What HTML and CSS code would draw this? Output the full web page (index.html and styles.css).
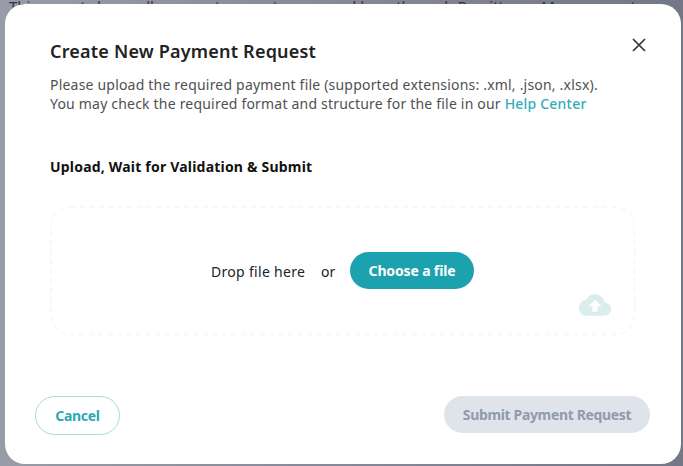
FILE: index.html
```
<!DOCTYPE html>
<html lang="en">
  <head>
    <meta charset="UTF-8" />
    <meta name="viewport" content="width=device-width, initial-scale=1.0" />
    <title>Create New Payment Request</title>
    <link rel="stylesheet" href="styles.css">
  </head>
  <body>
    <!-- page behind the modal -->
    <p class="page-text">This report shows all payment requests managed here through Remittance Management</p>

    <!-- modal -->
    <section class="modal" role="dialog">
      <button class="close" aria-label="Close">
        <svg width="14" height="14" viewBox="0 0 14 14">
          <path d="M1 1L13 13M13 1L1 13" fill="none" stroke="#333" stroke-width="1.7" />
        </svg>
      </button>

      <header class="modal-header">
        <h1>Create New Payment Request</h1>
        <p>Please upload the required payment file (supported extensions: .xml, .json, .xlsx).</p>
        <p>You may check the required format and structure for the file in our <a href="#">Help Center</a></p>
      </header>

      <h2>Upload, Wait for Validation &amp; Submit</h2>

      <div class="dropzone">
        <svg class="dropzone-border" width="586" height="130">
          <rect x="1" y="1" width="583.5" height="127.5" rx="19" fill="none" stroke="#f6f8f9" stroke-width="1.8" stroke-dasharray="5.5 4" />
        </svg>
        <span class="drop">Drop file here</span>
        <span class="or">or</span>
        <button class="btn choose">Choose a file</button>
        <svg class="cloud" width="32" height="32" viewBox="0 0 24 24">
          <path fill="#daeceb" d="M19.35 10.04C18.67 6.59 15.64 4 12 4 9.11 4 6.6 5.64 5.35 8.04 2.34 8.36 0 10.91 0 14c0 3.31 2.69 6 6 6h13c2.76 0 5-2.24 5-5 0-2.64-2.05-4.78-4.65-4.96zM14 13v4h-4v-4H7l5-5 5 5h-3z" />
        </svg>
      </div>

      <footer class="modal-footer">
        <button class="btn cancel">Cancel</button>
        <button class="btn submit" disabled>Submit Payment Request</button>
      </footer>
    </section>
  </body>
</html>
```
FILE: styles.css
```
* {
  margin: 0;
  padding: 0;
  box-sizing: border-box;
}
body {
  position: relative;
  height: 466px;
  padding: 4px 2px 2px 5px;
  overflow: hidden;
  font-family: "Noto Sans", "Open Sans", sans-serif;
  font-size: 14px;
  color: #222;
  background: linear-gradient(to right, #989ba8, #737786);
}
a {
  text-decoration: none;
  color: #35adb7;
}
button {
  border: none;
  background: none;
  font-family: inherit;
}
.page-text {
  position: absolute;
  top: -4px;
  left: 9px;
  white-space: nowrap;
  font-size: 15px;
  line-height: 20px;
  color: #30344a;
}
.modal {
  position: relative;
  display: flex;
  flex-direction: column;
  width: 676px;
  height: 460px;
  padding: 36px 31px 0 30px;
  border-radius: 20px;
  background-color: #fff;
}
.close {
  position: absolute;
  top: 34px;
  right: 35px;
  width: 14px;
  height: 14px;
}
.close svg {
  display: block;
}
.modal-header {
  padding-left: 15px;
  white-space: nowrap;
}
h1 {
  margin-bottom: 13px;
  font-size: 18px;
  line-height: 22px;
  font-weight: 600;
  letter-spacing: 0.2px;
}
.modal-header p {
  font-size: 14px;
  line-height: 19px;
  letter-spacing: 0.2px;
  color: #505050;
}
.modal-header a {
  font-weight: 500;
}
h2 {
  margin: 44px 0 0 15px;
  font-size: 14px;
  line-height: 20px;
  font-weight: 700;
  letter-spacing: 0.2px;
  color: #111;
}
.dropzone {
  position: relative;
  display: flex;
  align-items: center;
  width: 586px;
  height: 130px;
  margin: 29px 0 0 15px;
  padding-left: 161px;
}
.dropzone-border {
  position: absolute;
  top: 0;
  left: 0;
}
.drop {
  width: 110px;
  letter-spacing: 0.3px;
}
.or {
  width: 29px;
}
.btn {
  height: 37px;
  border-radius: 19px;
  font-size: 14px;
  font-weight: 700;
  white-space: nowrap;
}
.choose {
  width: 124px;
  margin-bottom: 2px;
  letter-spacing: -0.15px;
  color: #fff;
  background-color: #1ba2ae;
}
.cloud {
  position: absolute;
  right: 25px;
  bottom: 15px;
}
.modal-footer {
  display: flex;
  justify-content: space-between;
  margin-top: 60px;
}
.cancel {
  width: 85px;
  height: 39px;
  border: 1px solid #a5dce1;
  border-radius: 20px;
  letter-spacing: -0.3px;
  color: #2ba9b4;
}
.submit {
  width: 206px;
  letter-spacing: -0.35px;
  color: #8f9bac;
  background-color: #dfe4eb;
}
```
